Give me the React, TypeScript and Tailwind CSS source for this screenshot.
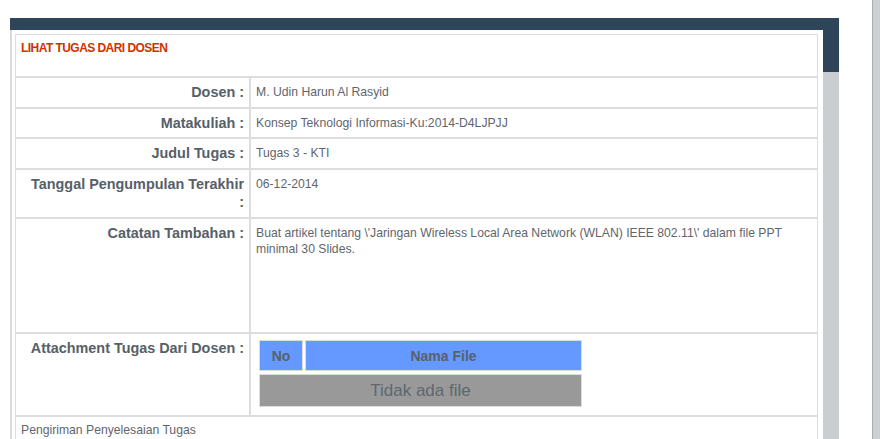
import type { ReactNode } from "react";

const font = { fontFamily: '"Liberation Sans", Arial, sans-serif' };

interface RowProps {
  label: ReactNode;
  children?: ReactNode;
  height: string;
}

function Row({ label, children, height }: RowProps) {
  return (
    <div className={`flex ${height}`}>
      <div className="w-[235px] shrink-0 border border-[#dddddd] pt-[5px] pr-[5px] text-right text-[14.4px] font-bold leading-[18px] whitespace-nowrap text-[#566069]">
        {label}
      </div>
      <div className="flex-1 border border-[#dddddd] pt-[6px] pl-[5px] text-[12.2px] leading-[16px] text-[#5f666d]">
        {children}
      </div>
    </div>
  );
}

function Attachments() {
  return (
    <div className="ml-[3px] flex w-[323px] flex-col">
      <div className="flex h-[31px] gap-[2px] text-[14px] font-bold text-[#58616a]">
        <div className="flex w-[44px] items-center justify-center border border-[#dddddd] bg-[#6699ff]">
          No
        </div>
        <div className="flex flex-1 items-center justify-center border border-[#dddddd] bg-[#6699ff]">
          Nama File
        </div>
      </div>
      <div className="mt-[3px] flex h-[33px] items-center justify-center border border-[#dddddd] bg-[#999999] text-[17px] text-[#5c6870]">
        Tidak ada file
      </div>
    </div>
  );
}

export default function App() {
  return (
    <div className="flex h-[439px] w-[880px] overflow-hidden bg-white" style={font}>
      <div className="ml-[10px] mt-[18px] flex h-[500px] w-[829px] flex-col">
        <div className="h-[12px] bg-[#2e4458]" />
        <div className="flex flex-1">
          <div className="w-[813px] border-l-2 border-[#dadada] pl-[3px] pt-[4px]">
            <div className="flex w-[803px] flex-col">
              <div className="h-[43px] border border-[#dddddd] pl-[5px] pt-[4px] text-[12px] font-bold leading-[18px] tracking-[-0.55px] text-[#cc3300]">
                LIHAT TUGAS DARI DOSEN
              </div>
              <Row label="Dosen :" height="h-[31px]">
                M. Udin Harun Al Rasyid
              </Row>
              <Row label="Matakuliah :" height="h-[30px]">
                Konsep Teknologi Informasi-Ku:2014-D4LJPJJ
              </Row>
              <Row label="Judul Tugas :" height="h-[31px]">
                Tugas 3 - KTI
              </Row>
              <Row
                label={
                  <>
                    Tanggal Pengumpulan Terakhir
                    <br />:
                  </>
                }
                height="h-[49px]"
              >
                06-12-2014
              </Row>
              <Row label="Catatan Tambahan :" height="h-[115px]">
                <span className="block whitespace-nowrap">
                  Buat artikel tentang \'Jaringan Wireless Local Area Network (WLAN) IEEE 802.11\' dalam file PPT
                </span>
                <span className="block">minimal 30 Slides.</span>
              </Row>
              <Row label="Attachment Tugas Dari Dosen :" height="h-[83px]">
                <Attachments />
              </Row>
              <div className="h-[40px] border border-[#dddddd] pl-[5px] pt-[5px] text-[12.2px] leading-[16px] text-[#5f666d]">
                Pengiriman Penyelesaian Tugas
              </div>
            </div>
          </div>
          <div className="flex w-[16px] flex-col">
            <div className="h-[42px] bg-[#2e4458]" />
            <div className="flex-1 bg-[#cacdd1]" />
          </div>
        </div>
      </div>
      <div className="ml-auto h-full w-[8px] border-l border-[#a9abad] bg-[#cdd0d3]" />
    </div>
  );
}
